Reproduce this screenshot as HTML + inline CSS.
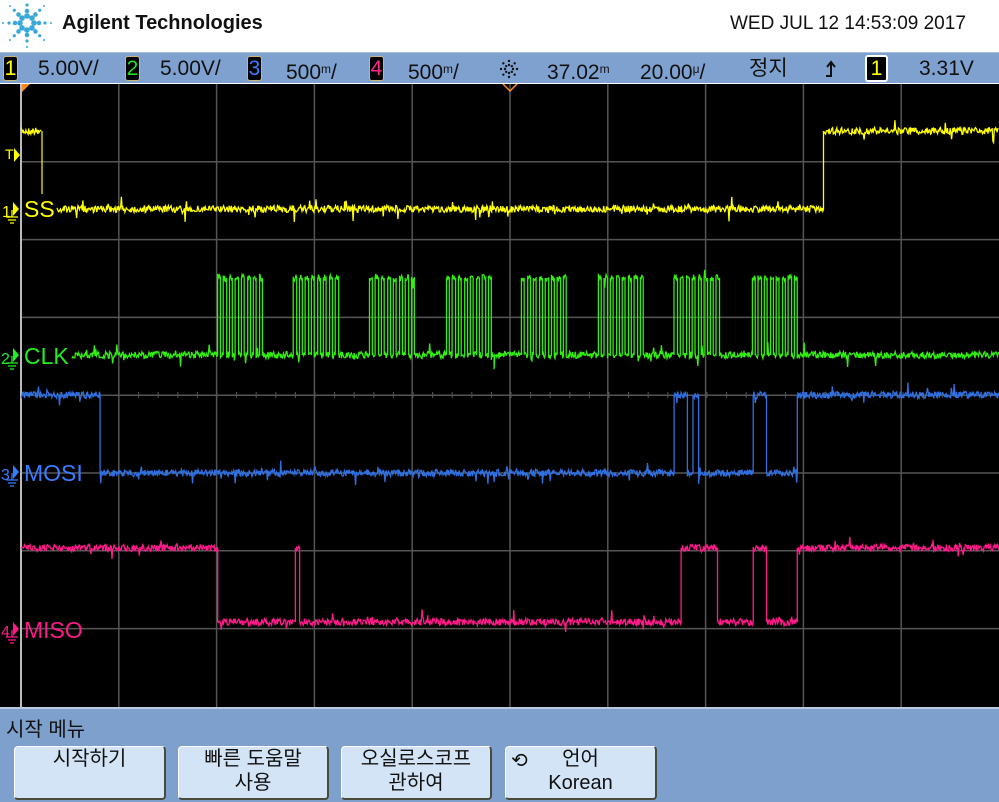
<!DOCTYPE html>
<html><head><meta charset="utf-8"><style>
*{margin:0;padding:0;box-sizing:border-box}
body{width:999px;height:802px;overflow:hidden;background:#fff;font-family:"Liberation Sans","Noto Sans CJK KR",sans-serif;position:relative}
.abs{position:absolute}
#bar{left:0;top:52px;width:999px;height:31px;background:#7fa1cf;border-top:1px solid #a9c0e0}
.bt{position:absolute;top:4px;height:24px;font-size:21px;line-height:24px;color:#111;white-space:nowrap}
.badge{position:absolute;top:3px;width:15px;height:25px;background:#000;border:1px solid #c9b77a;border-radius:3px;font-size:21px;line-height:23px;text-align:center}
#menu{left:0;top:707px;width:999px;height:95px;background:#7ea0cd;border-top:2px solid #b8c8e0}
.btn{position:absolute;top:37px;height:54px;background:#d4e4f7;border-radius:4px;border:1px solid #fff;border-right:2px solid #4a4a3a;border-bottom:2px solid #4a4a3a;font-size:20px;line-height:24px;text-align:center;color:#111}
</style></head><body>
<svg class="abs" style="left:0;top:0" width="60" height="52">
<g fill="#3aa8d8" id="star"></g>
</svg>
<div class="abs" style="left:62px;top:12px;font-size:20px;font-weight:bold;color:#111">Agilent Technologies</div>
<div class="abs" style="left:730px;top:13px;font-size:19px;color:#111">WED JUL 12 14:53:09 2017</div>
<div id="bar" class="abs">
<div class="badge" style="left:3px;color:#ffff00">1</div>
<div class="bt" style="left:38px">5.00V/</div>
<div class="badge" style="left:125px;color:#22dd22">2</div>
<div class="bt" style="left:160px">5.00V/</div>
<div class="badge" style="left:247px;color:#3a7cff">3</div>
<div class="bt" style="left:286px">500<span style="font-size:12px;vertical-align:6px">m</span>/</div>
<div class="badge" style="left:369px;color:#ff2a8a">4</div>
<div class="bt" style="left:408px">500<span style="font-size:12px;vertical-align:6px">m</span>/</div>
<svg class="abs" style="left:496px;top:4px" width="26" height="24"><g fill="#111" id="tb"></g></svg>
<div class="bt" style="left:547px">37.02<span style="font-size:12px;vertical-align:6px">m</span></div>
<div class="bt" style="left:640px">20.00<span style="font-size:12px;vertical-align:6px">μ</span>/</div>
<div class="bt" style="left:749px">정지</div>
<svg class="abs" style="left:824px;top:6px" width="14" height="20"><path d="M2 17 H7 V3 M3 8 L7 3 L11 8" fill="none" stroke="#111" stroke-width="2"/></svg>
<div class="badge" style="left:865px;top:2px;width:23px;height:27px;border:2px solid #fff;color:#ffff00">1</div>
<div class="bt" style="left:919px">3.31V</div>
</div>
<svg class="abs" style="left:0;top:84px" width="999" height="623" id="scr">
<rect width="999" height="623" fill="#000"/>
<g id="grid" stroke="#555" stroke-width="1.5"></g>
<line x1="21" y1="0" x2="21" y2="623" stroke="#bbb" stroke-width="2"/>
<polygon points="22,0 30,0 22,8" fill="#ff8a20"/>
<polyline points="503,0 510,7 517,0" fill="none" stroke="#ff8a20" stroke-width="1.5"/>
<g id="tr"></g>
<g font-family="Liberation Sans,sans-serif" id="lab">
<text x="5" y="75" fill="#ffff00" font-size="14">T</text><polygon points="14,64 20,71 14,78" fill="#ffff00"/>
<text x="2" y="133" fill="#ffff00" font-size="16">1</text><polygon points="13,118 19,125 13,132" fill="#ffff00"/>
<text x="24" y="133" fill="#ffff00" font-size="23">SS</text>
<text x="1" y="280" fill="#22ee22" font-size="16">2</text><polygon points="13,264 19,271 13,278" fill="#22ee22"/>
<text x="24" y="280" fill="#22ee22" font-size="23">CLK</text>
<text x="1" y="396" fill="#3a7cff" font-size="16">3</text><polygon points="13,381 19,388 13,395" fill="#3a7cff"/>
<text x="24" y="397" fill="#3a7cff" font-size="23">MOSI</text>
<text x="1" y="553" fill="#ff1a8a" font-size="16">4</text><polygon points="13,538 19,545 13,552" fill="#ff1a8a"/>
<text x="24" y="554" fill="#ff1a8a" font-size="23">MISO</text>
</g>
</svg>
<div id="menu" class="abs">
<div class="abs" style="left:6px;top:4px;font-size:20px;color:#111">시작 메뉴</div>
<div class="btn" style="left:14px;width:152px">시작하기</div>
<div class="btn" style="left:178px;width:151px">빠른 도움말<br>사용</div>
<div class="btn" style="left:341px;width:151px">오실로스코프<br>관하여</div>
<div class="btn" style="left:505px;width:152px"><span style="position:absolute;left:5px;top:2px">⟲</span>언어<br>Korean</div>
</div>
<script>
var NS="http://www.w3.org/2000/svg";
function el(p,t,a){var e=document.createElementNS(NS,t);for(var k in a)e.setAttribute(k,a[k]);p.appendChild(e);return e;}
var st=document.getElementById('star');
for(var i=0;i<8;i++){var a=i*Math.PI/4;[7,12,18,24].forEach(function(r,j){el(st,'circle',{cx:27+r*Math.cos(a),cy:23+r*Math.sin(a),r:[2.8,2.3,1.6,1][j]});});}
var tb=document.getElementById('tb');
for(var i=0;i<8;i++){var a=i*Math.PI/4;[4,8].forEach(function(r){el(tb,'circle',{cx:13+r*Math.cos(a),cy:12+r*Math.sin(a),r:1.2});});}
var g=document.getElementById('grid');
for(var i=1;i<10;i++){var x=21+i*97.8;el(g,'line',{x1:x,y1:0,x2:x,y2:623});}
for(var j=1;j<8;j++){var y=j*77.8;el(g,'line',{x1:21,y1:y,x2:999,y2:y});}
for(var x=21;x<999;x+=19.6){el(g,'line',{x1:x,y1:308,x2:x,y2:314,'stroke-width':1});}
// ground symbols
var lab=document.getElementById('lab');
[[125,'#ffff00'],[271,'#22ee22'],[388,'#3a7cff'],[545,'#ff1a8a']].forEach(function(c){var y=c[0];
 el(lab,'path',{d:'M12 '+(y+1)+' V'+(y+8)+' M6 '+(y+8)+' H18 M8 '+(y+11)+' H16 M10 '+(y+14)+' H14',stroke:c[1],'stroke-width':1.3,fill:'none'});});
var seed=7;function rnd(){seed=(seed*16807)%2147483647;return seed/2147483647;}
var tr=document.getElementById('tr');
function trace(col,segs,start){
 var pts=[],x=start,prevY=null;
 segs.forEach(function(s){var y=s[1];if(prevY!==null)pts.push(x+','+prevY,x+','+y);
  for(;x<s[0];x+=0.7){pts.push(x.toFixed(1)+','+(y+(rnd()-0.5)*7+(rnd()<0.04?(rnd()-0.5)*22:0)).toFixed(1));}
  prevY=y;});
 el(tr,'polyline',{points:pts.join(' '),fill:'none',stroke:col,'stroke-width':1.3});
}
trace('#ffff00',[[42,47]],21);
el(tr,'line',{x1:42,y1:47,x2:42,y2:110,stroke:'#ffff00','stroke-width':1.2});
trace('#ffff00',[[823,125],[999,47]],57);
var segs=[];var bs=[217,293,369,446,521,598,674,752];
bs.forEach(function(b){segs.push([b,271]);for(var k=0;k<8;k++){segs.push([b+k*6+3,194]);segs.push([b+k*6+6,271]);}});
segs.push([999,271]);
trace('#33ee11',segs,72);
trace('#2f6fe0',[[100,311],[674,389],[687,311],[693,389],[698,311],[753,389],[766,311],[797,389],[999,311]],21);
trace('#ff1a8a',[[217,464],[295,538],[299,464],[681,538],[717,464],[753,538],[766,464],[797,538],[999,464]],21);
</script>
</body></html>
